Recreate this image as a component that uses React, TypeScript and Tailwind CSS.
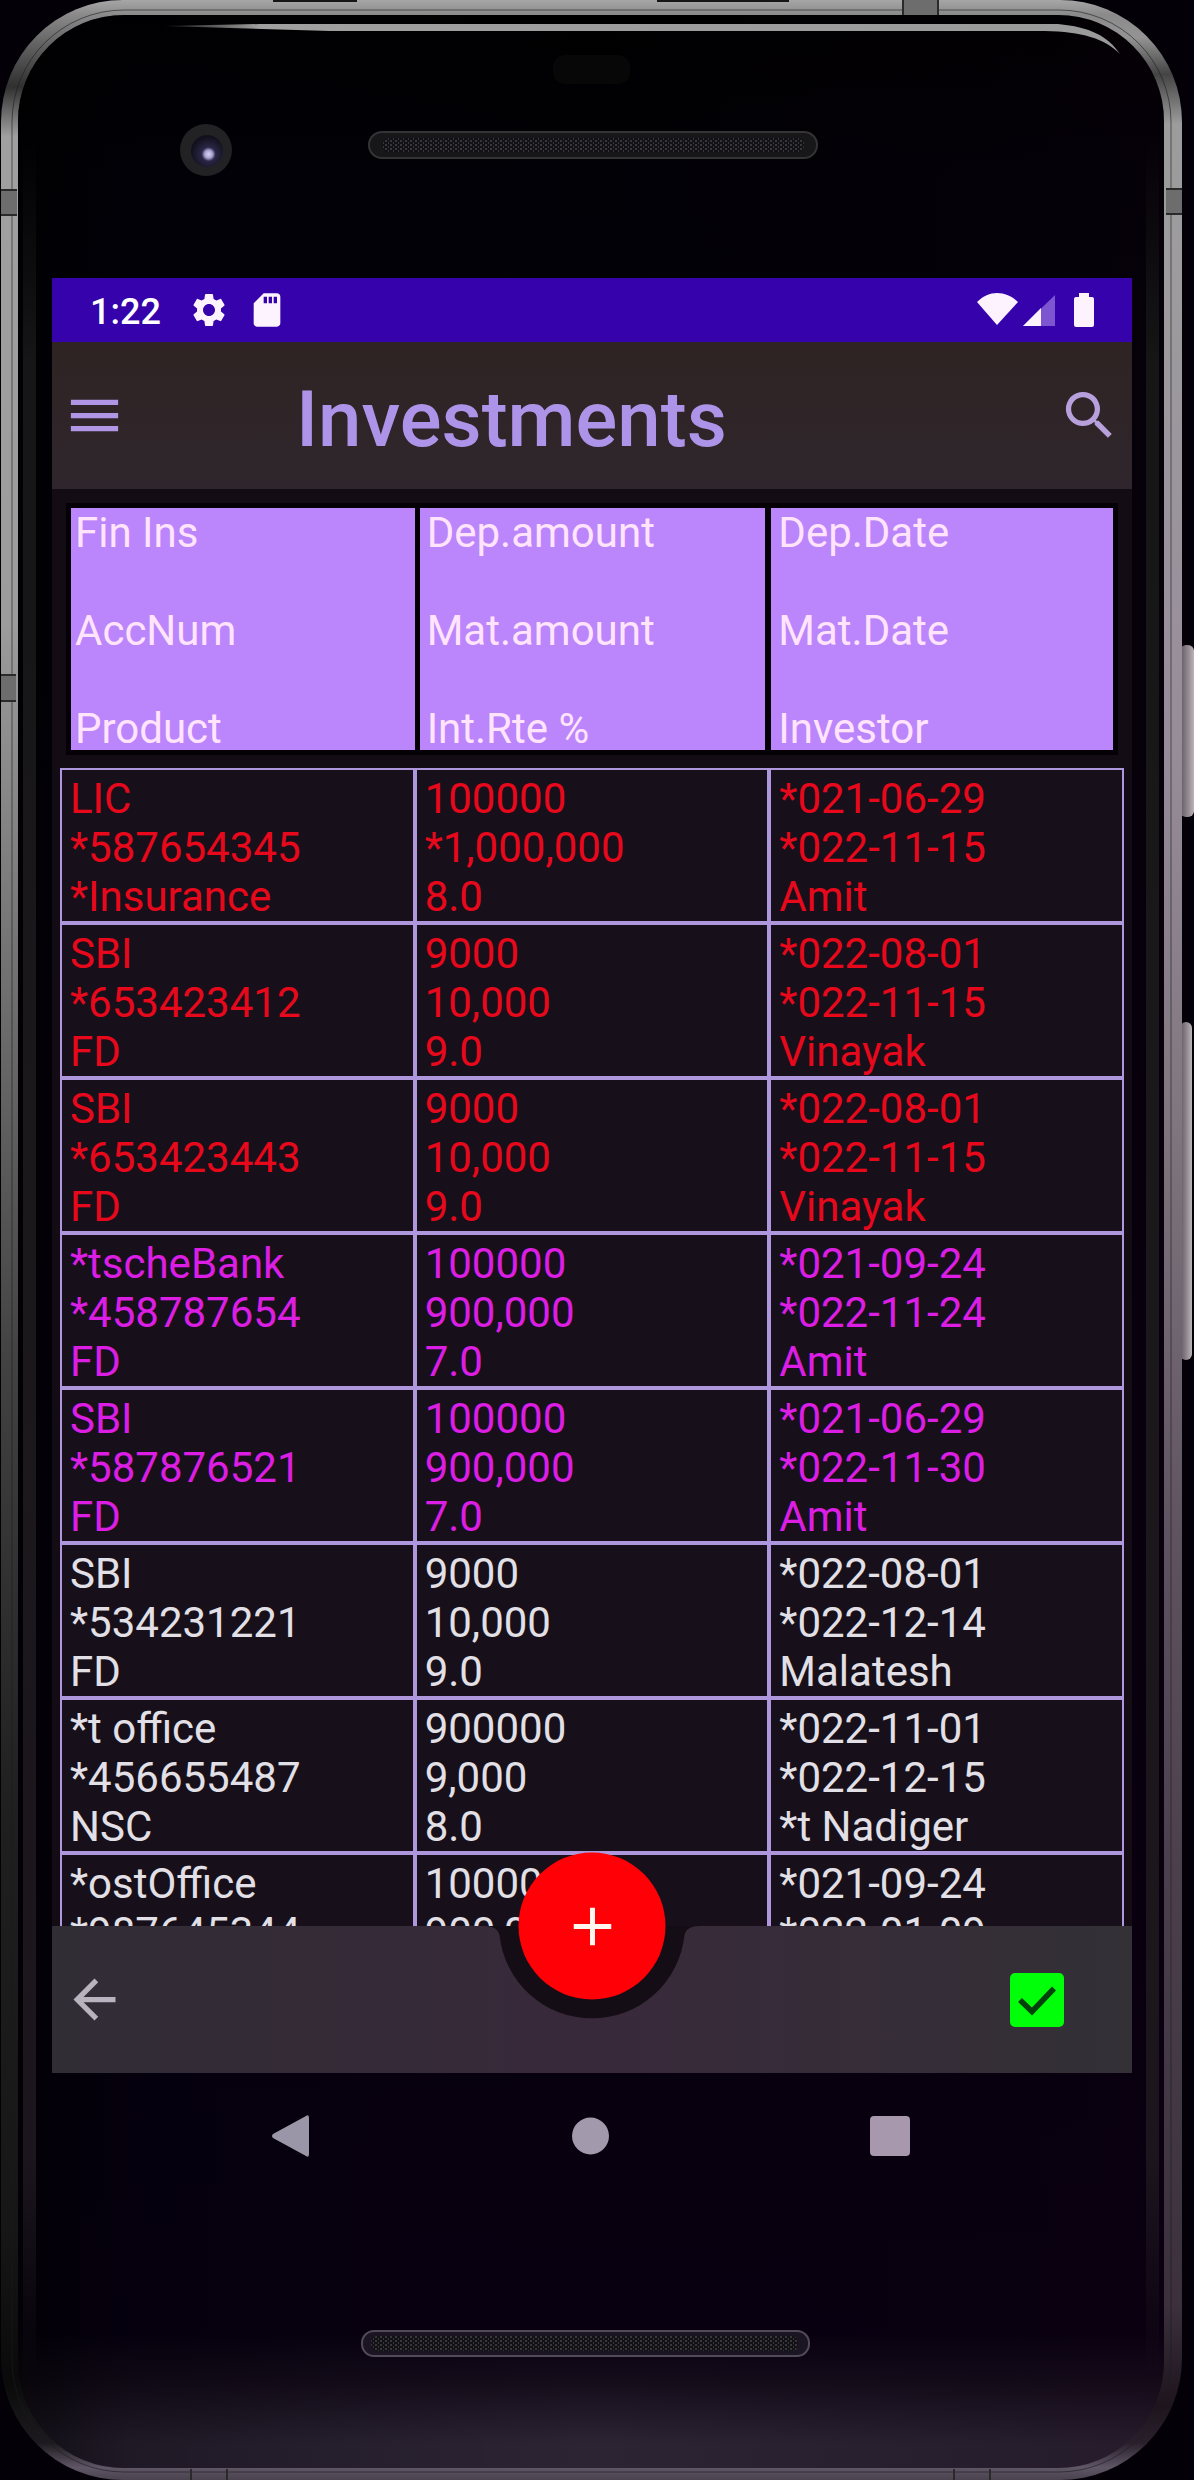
type Tone = 'due' | 'soon' | 'normal'

interface Investment {
  tone: Tone
  cells: [string[], string[], string[]]
}

const toneClass: Record<Tone, string> = {
  due: 'text-[#e8081c]',
  soon: 'text-[#dc1ee4]',
  normal: 'text-[#e2e0e6]',
}

const headings = [
  ['Fin Ins', 'AccNum', 'Product'],
  ['Dep.amount', 'Mat.amount', 'Int.Rte %'],
  ['Dep.Date', 'Mat.Date', 'Investor'],
]

const headingPadding = ['pl-[11px]', 'pl-[5px] pr-[4px]', 'pl-[2px] pr-[11px]']
const labelPadding = ['pl-1', 'pl-[7px]', 'pl-[7px]']

const investments: Investment[] = [
  { tone: 'due', cells: [['LIC', '*587654345', '*Insurance'], ['100000', '*1,000,000', '8.0'], ['*021-06-29', '*022-11-15', 'Amit']] },
  { tone: 'due', cells: [['SBI', '*653423412', 'FD'], ['9000', '10,000', '9.0'], ['*022-08-01', '*022-11-15', 'Vinayak']] },
  { tone: 'due', cells: [['SBI', '*653423443', 'FD'], ['9000', '10,000', '9.0'], ['*022-08-01', '*022-11-15', 'Vinayak']] },
  { tone: 'soon', cells: [['*tscheBank', '*458787654', 'FD'], ['100000', '900,000', '7.0'], ['*021-09-24', '*022-11-24', 'Amit']] },
  { tone: 'soon', cells: [['SBI', '*587876521', 'FD'], ['100000', '900,000', '7.0'], ['*021-06-29', '*022-11-30', 'Amit']] },
  { tone: 'normal', cells: [['SBI', '*534231221', 'FD'], ['9000', '10,000', '9.0'], ['*022-08-01', '*022-12-14', 'Malatesh']] },
  { tone: 'normal', cells: [['*t office', '*456655487', 'NSC'], ['900000', '9,000', '8.0'], ['*022-11-01', '*022-12-15', '*t Nadiger']] },
  { tone: 'normal', cells: [['*ostOffice', '*987645344', 'NSC'], ['100000', '900,000', '8.0'], ['*021-09-24', '*022-01-09', 'Amit']] },
]

/* Phone body: metal frame, glass, camera, speakers and side keys. */
function Chassis() {
  return (
    <svg
      aria-hidden="true"
      className="absolute inset-0 h-full w-full"
      viewBox="0 0 1194 2480"
      preserveAspectRatio="none"
    >
      <defs>
        <linearGradient id="metalLeft" x1="0" y1="0" x2="0" y2="1">
          <stop offset="0" stopColor="#a6a6a6" />
          <stop offset="0.006" stopColor="#8a8a8a" />
          <stop offset="0.02" stopColor="#5c5c5c" />
          <stop offset="0.035" stopColor="#303030" />
          <stop offset="0.055" stopColor="#a0a0a0" />
          <stop offset="0.25" stopColor="#9c9c9c" />
          <stop offset="0.4" stopColor="#6f6f6f" />
          <stop offset="0.55" stopColor="#424242" />
          <stop offset="0.73" stopColor="#1f1f1f" />
          <stop offset="0.9" stopColor="#161616" />
          <stop offset="0.96" stopColor="#0a0a0a" />
          <stop offset="0.985" stopColor="#1c1a1e" />
          <stop offset="0.995" stopColor="#5f5666" />
          <stop offset="1" stopColor="#4b424f" />
        </linearGradient>
        <linearGradient id="metalRight" x1="0" y1="0" x2="0" y2="1">
          <stop offset="0" stopColor="#a6a6a6" />
          <stop offset="0.006" stopColor="#8a8a8a" />
          <stop offset="0.015" stopColor="#949494" />
          <stop offset="0.03" stopColor="#444444" />
          <stop offset="0.05" stopColor="#9c9c9c" />
          <stop offset="0.12" stopColor="#9d9b9e" />
          <stop offset="0.3" stopColor="#978c9a" />
          <stop offset="0.45" stopColor="#80767f" />
          <stop offset="0.62" stopColor="#5f5361" />
          <stop offset="0.75" stopColor="#4c404f" />
          <stop offset="0.93" stopColor="#3b303c" />
          <stop offset="0.97" stopColor="#1d141e" />
          <stop offset="0.985" stopColor="#2a202c" />
          <stop offset="0.995" stopColor="#5f5666" />
          <stop offset="1" stopColor="#4b424f" />
        </linearGradient>
        <linearGradient id="key" x1="0" y1="0" x2="1" y2="0">
          <stop offset="0" stopColor="#5f575f" />
          <stop offset="0.6" stopColor="#948b93" />
          <stop offset="1" stopColor="#bdb4bb" />
        </linearGradient>
        <linearGradient id="glass" x1="0" y1="0" x2="0" y2="1">
          <stop offset="0" stopColor="#000000" />
          <stop offset="0.07" stopColor="#020106" />
          <stop offset="0.945" stopColor="#080010" />
          <stop offset="0.965" stopColor="#150d1a" />
          <stop offset="0.99" stopColor="#2c2433" />
          <stop offset="1" stopColor="#2c2433" />
        </linearGradient>
        <linearGradient id="tint" x1="0" y1="0" x2="1" y2="0">
          <stop offset="0" stopColor="#000000" stopOpacity="0.6" />
          <stop offset="0.1" stopColor="#000008" stopOpacity="0.3" />
          <stop offset="0.5" stopColor="#06000f" stopOpacity="0" />
          <stop offset="1" stopColor="#120012" stopOpacity="0.25" />
        </linearGradient>
        <linearGradient id="edge" x1="0" y1="0" x2="0" y2="1">
          <stop offset="0" stopColor="#141414" stopOpacity="0" />
          <stop offset="0.1" stopColor="#161616" />
          <stop offset="0.5" stopColor="#1b181b" />
          <stop offset="0.9" stopColor="#1c151d" />
          <stop offset="1" stopColor="#1c151d" stopOpacity="0" />
        </linearGradient>
        <linearGradient id="shine" x1="0" y1="0" x2="1" y2="0">
          <stop offset="0" stopColor="#8a8a8a" stopOpacity="0.2" />
          <stop offset="0.1" stopColor="#a0a0a0" />
          <stop offset="1" stopColor="#9a9a9a" />
        </linearGradient>
        <radialGradient id="lens" cx="0.55" cy="0.6" r="0.55">
          <stop offset="0" stopColor="#d8d4f4" />
          <stop offset="0.22" stopColor="#a9a3d2" />
          <stop offset="0.4" stopColor="#2a2646" />
          <stop offset="1" stopColor="#12101c" />
        </radialGradient>
        <pattern id="mesh" width="5" height="4" patternUnits="userSpaceOnUse">
          <rect width="5" height="4" fill="#121116" />
          <rect width="2" height="2" fill="#39373c" />
          <rect x="3" y="2" width="1" height="2" fill="#39373c" />
        </pattern>
        <clipPath id="leftHalf"><rect width="592" height="2480" /></clipPath>
        <clipPath id="rightHalf"><rect x="592" width="602" height="2480" /></clipPath>
      </defs>

      <rect x="1180" y="645" width="14" height="172" rx="6" fill="url(#key)" />
      <rect x="1180" y="1022" width="12" height="338" rx="6" fill="url(#key)" />

      <rect x="1" y="0" width="1181" height="2480" rx="122" fill="url(#metalLeft)" clipPath="url(#leftHalf)" />
      <rect x="1" y="0" width="1181" height="2480" rx="122" fill="url(#metalRight)" clipPath="url(#rightHalf)" />
      <path d="M273 1h84M657 1h132" stroke="#151515" strokeWidth="2" />

      <rect x="12" y="10" width="1159" height="2462" rx="112" fill="none" stroke="#1c1c1c" strokeOpacity="0.6" strokeWidth="1" />
      <rect x="18" y="15" width="1146" height="2453" rx="106" fill="url(#glass)" />
      <rect x="18" y="15" width="1146" height="2453" rx="106" fill="url(#tint)" />

      <g fill="#6d6d6d">
        <rect x="1" y="190" width="16" height="25" />
        <rect x="1166" y="189" width="16" height="25" />
        <rect x="903" y="0" width="35" height="15" />
        <rect x="1" y="675" width="15" height="26" />
      </g>
      <path d="M1 190h16M1 215h16M1166 189h16M1166 214h16M903 0v15M938 0v15M1 675h15M1 701h15M191 2469v11M227 2469v11M954 2469v11M990 2469v11" stroke="#2a2a2a" strokeWidth="2" />

      <rect x="23" y="140" width="13" height="2240" fill="url(#edge)" />
      <rect x="1146" y="140" width="13" height="2240" fill="url(#edge)" />

      <path d="M164 26 L260 24 H1058 C1090 27 1108 36 1120 54 C1104 38 1082 32 1045 31 H330 Z" fill="url(#shine)" />

      <rect x="553" y="55" width="77" height="29" rx="12" fill="#070707" />
      <circle cx="206" cy="150" r="26" fill="#222224" />
      <circle cx="207" cy="151" r="16" fill="url(#lens)" />

      <rect x="369" y="132" width="448" height="26" rx="13" fill="#17171a" stroke="#343437" strokeWidth="2" />
      <rect x="382" y="138" width="422" height="14" rx="6" fill="url(#mesh)" />
      <rect x="362" y="2331" width="447" height="25" rx="12" fill="#1b1422" stroke="#534a59" strokeWidth="2" />
      <rect x="371" y="2336" width="427" height="15" rx="6" fill="url(#mesh)" />
    </svg>
  )
}

function StatusBar() {
  return (
    <div className="flex h-16 shrink-0 items-center bg-[#3602ab] pl-[38px] pr-[37px] text-white">
      <time className="pt-1 text-[36px] leading-[42px] font-medium">1:22</time>
      <svg aria-hidden="true" className="ml-7 h-10 w-10" viewBox="0 0 24 24" fill="#fdf3ff">
        <path d="M19.14 12.94c.04-.3.06-.61.06-.94 0-.32-.02-.64-.07-.94l2.03-1.58c.18-.14.23-.41.12-.61l-1.92-3.32c-.12-.22-.37-.29-.59-.22l-2.39.96c-.5-.38-1.03-.7-1.62-.94l-.36-2.54c-.04-.24-.24-.41-.48-.41h-3.84c-.24 0-.43.17-.47.41l-.36 2.54c-.59.24-1.13.57-1.62.94l-2.39-.96c-.22-.08-.47 0-.59.22L2.74 8.87c-.12.21-.08.47.12.61l2.03 1.58c-.05.3-.09.63-.09.94s.02.64.07.94l-2.03 1.58c-.18.14-.23.41-.12.61l1.92 3.32c.12.22.37.29.59.22l2.39-.96c.5.38 1.03.7 1.62.94l.36 2.54c.05.24.24.41.48.41h3.84c.24 0 .44-.17.47-.41l.36-2.54c.59-.24 1.13-.56 1.62-.94l2.39.96c.22.08.47 0 .59-.22l1.92-3.32c.12-.22.07-.47-.12-.61l-2.01-1.58zM12 15.6c-1.98 0-3.6-1.62-3.6-3.6s1.62-3.6 3.6-3.6 3.6 1.62 3.6 3.6-1.62 3.6-3.6 3.6z" />
      </svg>
      <svg aria-hidden="true" className="ml-[18px] h-10 w-10" viewBox="0 0 24 24" fill="#fdf3ff">
        <path d="M18 2h-8L4.02 8 4 20c0 1.100.9 2 2 2h12c1.100 0 2-.9 2-2V4c0-1.100-.9-2-2-2zm-6 6h-2V4h2v4zm3 0h-2V4h2v4zm3 0h-2V4h2v4z" />
      </svg>
      <svg aria-hidden="true" className="ml-auto h-[34px] w-[118px]" viewBox="0 0 118 34">
        <path d="M0 9C6 3 13 0 20 0s15 3 21 9L20 32Z" fill="#fdf3ff" />
        <path d="M46 33 78 2v31Z" fill="#7d55d0" />
        <path d="M46 33 64 15v18Z" fill="#fdf3ff" />
        <path d="M102 0h10v4h3a2 2 0 0 1 2 2v26a2 2 0 0 1-2 2H99a2 2 0 0 1-2-2V6a2 2 0 0 1 2-2h3Z" fill="#fdf3ff" />
      </svg>
    </div>
  )
}

function AppBar() {
  return (
    <header className="flex h-[147px] shrink-0 items-center bg-linear-to-b from-[#2f2423] to-[#2f262d] px-[11px]">
      <button type="button" aria-label="Open menu">
        <svg className="h-[63px] w-[63px]" viewBox="0 0 24 24" fill="#b296e6">
          <path d="M3 18h18v-2H3v2zm0-5h18v-2H3v2zm0-7v2h18V6H3z" />
        </svg>
      </button>
      <h1 className="ml-[170px] grow pt-2 text-[78px] leading-[92px] font-medium text-[#ad94e8]">Investments</h1>
      <button type="button" aria-label="Search">
        <svg className="h-[63px] w-[63px]" viewBox="0 0 24 24" fill="#b8a0dc">
          <path d="M15.500 14h-.79l-.28-.27A6.471 6.471 0 0 0 16 9.500 6.500 6.500 0 1 0 9.500 16c1.610 0 3.090-.59 4.230-1.570l.27.28v.79l5 4.990L20.490 19l-4.990-5zm-6 0C7.010 14 5 11.990 5 9.500S7.010 5 9.500 5 14 7.010 14 9.500 11.990 14 9.500 14z" />
        </svg>
      </button>
    </header>
  )
}

function InvestmentTable() {
  return (
    <main className="min-h-0 grow overflow-hidden bg-[#140c15] px-2 pt-[19px]">
      <table className="w-full table-fixed border-separate border-spacing-0 text-left text-[42px]">
        <thead>
          <tr>
            {headings.map((lines, i) => (
              <th key={lines[0]} scope="col" className={`pb-[18px] font-normal ${headingPadding[i]}`}>
                <div className={`flex flex-col gap-[55px] bg-[#bb86fb] pt-[3px] leading-[43px] text-[#ffe4fb] shadow-[0_0_0_5px_#040006] ${labelPadding[i]}`}>
                  {lines.map((line) => (
                    <span key={line}>{line}</span>
                  ))}
                </div>
              </th>
            ))}
          </tr>
        </thead>
        <tbody>
          {investments.map((row, r) => (
            <tr key={r} className={toneClass[row.tone]}>
              {row.cells.map((lines, c) => (
                <td key={c} className="border-2 border-[#ae97dc] bg-[#17101a] pt-1 pl-2 leading-[49px]">
                  {lines.map((line, l) => (
                    <div key={l}>{line}</div>
                  ))}
                </td>
              ))}
            </tr>
          ))}
        </tbody>
      </table>
    </main>
  )
}

function BottomBar() {
  return (
    <footer className="relative flex h-[147px] shrink-0 items-center justify-between bg-linear-to-r from-[#312d35] via-[#38293a] to-[#333036] pr-[68px] pl-[11px]">
      <button type="button" aria-label="Back">
        <svg className="h-[63px] w-[63px]" viewBox="0 0 24 24" fill="#b9b3bf">
          <path d="M20 11H7.830l5.590-5.590L12 4l-8 8 8 8 1.410-1.410L7.830 13H20v-2z" />
        </svg>
      </button>
      <label className="relative block h-[54px] w-[54px]">
        <span className="sr-only">Show active investments</span>
        <input type="checkbox" defaultChecked className="block h-[54px] w-[54px] appearance-none rounded-[5px] bg-[#00ff08]" />
        <svg aria-hidden="true" className="pointer-events-none absolute inset-0" viewBox="0 0 54 54" fill="none">
          <path d="M10 27 22 38.500 44 15.500" stroke="#06400c" strokeWidth="5.500" />
        </svg>
      </label>
      <div className="absolute top-0 left-1/2 -translate-x-1/2">
        <svg aria-hidden="true" className="h-24 w-[216px]" viewBox="0 0 216 96" fill="#150d16">
          <path d="M0 0C9 0 14 3 15.500 9A93 93 0 0 0 200.500 9C202 3 207 0 216 0Z" />
        </svg>
      </div>
      <button
        type="button"
        aria-label="Add investment"
        className="absolute top-0 left-1/2 flex h-[147px] w-[147px] -translate-x-1/2 -translate-y-1/2 items-center justify-center rounded-full bg-[#ff0006]"
      >
        <svg className="h-[38px] w-[38px]" viewBox="0 0 38 38" stroke="#fff6f0" strokeWidth="5">
          <path d="M0 19h38M19 0v38" />
        </svg>
      </button>
    </footer>
  )
}

function NavigationBar() {
  return (
    <nav aria-label="System navigation" className="flex h-[407px] shrink-0 items-start justify-between pt-[42px] pr-[222px] pl-[219px]">
      <button type="button" aria-label="Back">
        <svg className="h-[42px] w-[39px]" viewBox="0 0 39 42" fill="#9b96a7">
          <path d="M35 1Q38 -1 38 3V39Q38 43 35 41L2 23Q0 21 2 19Z" />
        </svg>
      </button>
      <button type="button" aria-label="Home">
        <svg className="h-[42px] w-[39px]" viewBox="0 0 39 42" fill="#a399ac">
          <circle cx="19.500" cy="21" r="18.500" />
        </svg>
      </button>
      <button type="button" aria-label="Recent apps">
        <svg className="h-[42px] w-10" viewBox="0 0 40 42" fill="#a798ae">
          <rect y="1" width="40" height="40" rx="4" />
        </svg>
      </button>
    </nav>
  )
}

export default function App() {
  return (
    <div className="relative h-screen bg-[#040007] font-[Roboto,sans-serif]">
      <Chassis />
      <div className="relative flex h-full flex-col pt-[278px] pr-[62px] pl-[52px]">
        <StatusBar />
        <AppBar />
        <InvestmentTable />
        <BottomBar />
        <NavigationBar />
      </div>
    </div>
  )
}
